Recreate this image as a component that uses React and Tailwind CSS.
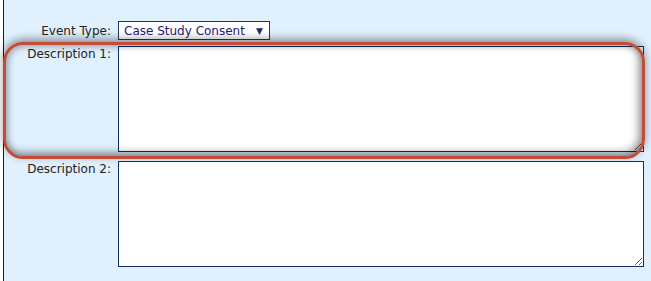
export default function App() {
  return (
    <div className="relative h-[281px] w-[651px] overflow-hidden bg-white pl-[3px]" style={{ fontFamily: '"DejaVu Sans", Verdana, sans-serif' }}>
      <div className="h-full border-l border-[#1a1a1a] bg-[#e0f0fd] pt-[21px]">
        <div className="flex items-center">
          <div className="w-[107px] text-right text-[12px] leading-[14px] text-[#222]">Event Type:</div>
          <div className="ml-[7px] flex h-[19px] w-[152px] items-center justify-between border border-[#1b3a6b] bg-white pl-[5px] pr-[6px] text-[12px] leading-[14px] text-[#24207a]">
            <span>Case Study Consent</span>
            <span className="text-[9px] text-[#1b2a6b]">▼</span>
          </div>
        </div>
        <div className="mt-[6px] flex items-start">
          <div className="w-[107px] pt-[1px] text-right text-[12px] leading-[14px] text-[#222]">Description 1:</div>
          <textarea className="ml-[7px] h-[106px] w-[526px] border border-[#0f3068] bg-white outline-none" />
        </div>
        <div className="mt-[9px] flex items-start">
          <div className="w-[107px] pt-[1px] text-right text-[12px] leading-[14px] text-[#222]">Description 2:</div>
          <textarea className="ml-[7px] h-[106px] w-[526px] border border-[#0f3068] bg-white outline-none" />
        </div>
      </div>
      <div className="pointer-events-none absolute left-[3px] top-[42px] h-[117px] w-[642px] rounded-[20px] border-[3px] border-[#c24c36] shadow-[0_-3px_8px_rgba(0,0,0,0.4),inset_-3px_-3px_8px_rgba(0,0,0,0.45),inset_3px_2px_6px_rgba(0,0,0,0.2)]" />
    </div>
  );
}
